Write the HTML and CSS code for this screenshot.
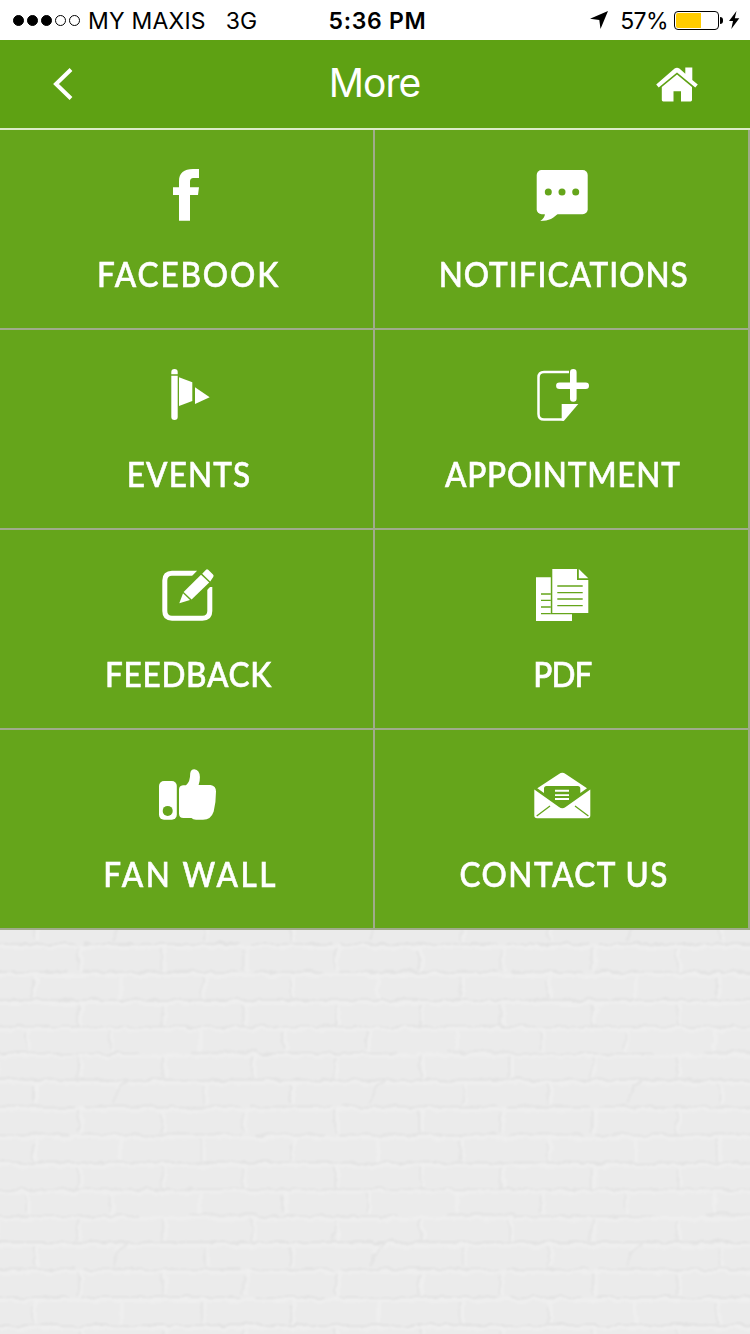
FILE: index.html
```
<!DOCTYPE html>
<html lang="en">
<head>
    <meta charset="UTF-8">
    <meta name="viewport" content="width=device-width, initial-scale=1.0">
    <title>More</title>
    <link rel="stylesheet" href="styles.css">
</head>
<body>
    <div class="status-bar">
        <div class="status-left">
            <div class="signal">
                <span class="dot full"></span>
                <span class="dot full"></span>
                <span class="dot full"></span>
                <span class="dot"></span>
                <span class="dot"></span>
            </div>
            <span class="carrier">MY MAXIS</span>
            <span class="network">3G</span>
        </div>
        <div class="time">5:36 PM</div>
        <div class="status-right">
            <svg class="location" width="20" height="20" viewBox="0 0 20 20"><path d="M19 1 L11.5 19 L10.3 10 L1 8.8 Z"/></svg>
            <span class="percent">57%</span>
            <div class="battery"><div class="battery-level" style="width: 61%"></div></div>
            <div class="battery-cap"></div>
            <svg class="bolt" width="12" height="20" viewBox="0 0 12 20"><path d="M8.5 1 L1 11 H5 L3.3 19 L11.3 8.3 H6.8 Z"/></svg>
        </div>
    </div>

    <header class="header">
        <svg class="back" width="24" height="36" viewBox="0 0 24 36"><path d="M21 3.5 L6 18 L21 32.5"/></svg>
        <h1>More</h1>
        <svg class="home" width="44" height="36" viewBox="0 0 44 36">
            <path d="M1.2 18.6 L19.6 2.6 Q22 .9 24.4 2.6 L30.3 7.8 V1.5 H37.3 V13.9 L42.8 18.6 L40.3 21.5 L22 6.4 L3.7 21.5 Z"/>
            <path d="M22 8.6 L37 21 V34 Q37 35.4 35.6 35.4 H26 V25.3 H18.5 V35.4 H8.2 Q6.8 35.4 6.8 34 V21 Z"/>
        </svg>
    </header>

    <div class="menu">
        <a class="item">
            <svg class="icon" viewBox="0 0 61 60"><path d="M43 4 H37 C28 4 23 8 23 16 V22.3 H17 V30 H23 V55.7 H34 V30 H42 L43 22.3 H34 V17.5 C34 14 35 13 38 13 H43 Z"/></svg>
            <span class="label facebook">FACEBOOK</span>
        </a>
        <a class="item">
            <svg class="icon" viewBox="0 0 61 60">
                <rect x="5.7" y="5" width="51" height="44.3" rx="5"/>
                <path d="M14 48 C14 52 12 54 9.3 56 C18 56 23 53 27.5 48 Z"/>
                <g class="cut"><circle cx="17.3" cy="27" r="3.5"/><circle cx="31" cy="27" r="3.5"/><circle cx="44.7" cy="27" r="3.5"/></g>
            </svg>
            <span class="label notifications">NOTIFICATIONS</span>
        </a>
        <a class="item">
            <svg class="icon" viewBox="0 0 61 60">
                <path d="M15.3 9.3 V7 Q15.3 4 18.5 4 Q21.7 4 21.7 7 V9.3 Z"/>
                <path d="M15.3 10.7 H21.7 V52 Q21.7 55 18.5 55 Q15.3 55 15.3 52 Z"/>
                <path d="M23 12.3 L36.3 17.3 V36 L23 41 Z"/>
                <path d="M39 22.3 L53.7 32.3 L39 39 Z"/>
            </svg>
            <span class="label events">EVENTS</span>
        </a>
        <a class="item">
            <svg class="icon" viewBox="0 0 61 60">
                <path class="line thin" d="M38 7 H13 Q7.5 7 7.5 12.5 V49 Q7.5 54.6 13 54.6 H33"/>
                <path d="M30.7 39 H47.3 L33 55.8 H30.7 Z"/>
                <path class="line plus" d="M42.3 7.3 V33.4 M28.4 20.7 H54.7"/>
            </svg>
            <span class="label appointment">APPOINTMENT</span>
        </a>
        <a class="item">
            <svg class="icon" viewBox="0 0 61 60">
                <path class="line thick" d="M41 8.2 H16 Q8.8 8.2 8.8 15.4 V46 Q8.8 53.2 16 53.2 H46.4 Q53.8 53.2 53.8 46 V22"/>
                <path class="cut" d="M41.8 5 V11 H36 Z M51 25 L57 19 H51 Z"/>
                <path d="M23.3 38.3 L27 28.2 L34 35 Z"/>
                <path d="M27.6 27 L45 9.8 L53.2 17.6 L35.6 34.6 Z"/>
                <path d="M46.2 8.8 L49.8 5 Q50.9 3.6 52.2 4.8 L57 9.5 Q58.2 10.8 57.2 12 L54.2 16.4 Z"/>
            </svg>
            <span class="label feedback">FEEDBACK</span>
        </a>
        <a class="item">
            <svg class="icon" viewBox="0 0 61 60">
                <path d="M5 12.3 H19.8 V49.3 H41 V56 H5 Z"/>
                <path d="M21.3 4 H46 V15 H57.3 V48 H21.3 Z"/>
                <path d="M47.8 4 L57.3 13.3 H47.8 Z"/>
                <path class="cut-line" d="M26.3 21 H51.7 M26.3 27.7 H51.7 M26.3 34 H51.7 M26.3 40.7 H51.7 M10 29 H19.8 M10 35.3 H19.8 M10 42 H19.8 M10 48.6 H19.8"/>
            </svg>
            <span class="label pdf">PDF</span>
        </a>
        <a class="item">
            <svg class="icon" viewBox="0 0 61 60">
                <rect x="3" y="16" width="17.8" height="38.8" rx="5"/>
                <circle class="cut" cx="11.7" cy="45.9" r="5"/>
                <path d="M27 20.2 H30 Q34.2 17 34.2 8.5 Q34.8 4.3 38.3 4.3 Q43.7 5 43.9 12 Q44 16 42.6 20 H54.5 Q60 20.6 60 26.5 Q60 37 57.7 46.5 Q55 54.8 47 54.8 H40 Q37 54.8 35.5 53 H27.5 Q23 53 23 48.5 V24.5 Q23 20.5 27 20.2 Z"/>
            </svg>
            <span class="label fan-wall">FAN WALL</span>
        </a>
        <a class="item">
            <svg class="icon" viewBox="0 0 61 60">
                <path d="M6.3 23.3 L28 9 Q31.3 6.6 34.6 9 L56 23.3 L49.3 28 V23.5 Q49.3 21 46.8 21 H15.6 Q13 21 13 23.5 V28 Z"/>
                <path d="M3.3 24.6 L28 42 Q31.3 44.4 34.6 42 L59.3 24.6 V50.5 Q59.3 53.3 56.5 53.3 H6.1 Q3.3 53.3 3.3 50.5 Z"/>
                <path d="M24 24.8 H38 V26.7 H24 Z M24 29.2 H38 V31 H24 Z M24 33.1 H38 V34.9 H24 Z"/>
                <path class="cut-line" d="M5.7 51 L19 41 M57.4 51 L44 41"/>
            </svg>
            <span class="label contact">CONTACT US</span>
        </a>
    </div>

    <svg class="wall" width="750" height="404">
        <defs>
            <pattern id="bricks" y="13" width="257.3" height="162.6" patternUnits="userSpaceOnUse">
                <rect class="brick" width="258" height="163"/>
                <path class="wall-light" d="M0 4 H258 M0 32 H258 M0 60 H258 M0 86 H258 M0 113 H258 M0 140 H258 M81 2 V28 M165 2 V28 M247 2 V28 M36 30 V56 M121 30 V56 M205 30 V56 M81 58 V83 M165 58 V83 M247 58 V83 M29 85 V109 M112 85 V109 M200 85 V109 M80 112 V136 M166 112 V136 M255 112 V136 M36 138 V161 M116 146 Q120 138 132 138 M207 138 V161"/>
                <path class="wall-dark" d="M0 1 H75 M84 1 H240 M250 1 H258 M0 29 H68 M82 29 H240 M254 29 H258 M0 57 H258 M0 83.5 H258 M0 110.5 H140 M190 109 H258 M0 136.5 H258"/>
                <path class="wall-side" d="M78 4 V27 M162 6 V27 M243 8 V27 M33 38 V55 M202 34 V55 M78 62 V83 M163 62 V83 M243 62 V83 M26 90 V106 M110 88 V106 M79 114 L75 135 M163 114 V135 M252 114 V135 M33 142 V160 M113 160 Q115 144 128 138 M205 142 V160"/>
            </pattern>
            <filter id="rough" x="0" y="0" width="100%" height="100%">
                <feTurbulence type="fractalNoise" baseFrequency="0.07" numOctaves="3" seed="4" result="noise"/>
                <feDisplacementMap in="SourceGraphic" in2="noise" scale="7" xChannelSelector="R" yChannelSelector="G"/>
                <feGaussianBlur stdDeviation="0.9"/>
            </filter>
        </defs>
        <rect x="-10" y="-10" width="770" height="424" fill="url(#bricks)" filter="url(#rough)"/>
    </svg>
</body>
</html>
```
FILE: styles.css
```
* { box-sizing: border-box; }
body { margin: 0; width: 750px; height: 1334px; overflow: hidden; background: #ececec; font-family: Inter, "Liberation Sans", sans-serif; }

.status-bar { display: grid; grid-template-columns: 1fr auto 1fr; align-items: center; height: 40px; padding: 0 10px 0 13px; background: #fff; color: #000; font-size: 23px; }
.status-left, .status-right, .signal { display: flex; align-items: center; }
.status-left, .time, .percent { padding-top: 1px; }
.status-right { justify-content: flex-end; }
.signal { gap: 3px; }
.dot { width: 11px; height: 11px; border: 1px solid #000; border-radius: 50%; }
.dot.full { background: #000; }
.carrier { margin-left: 8px; letter-spacing: 0.2px; }
.network { margin-left: 20px; }
.time { padding-left: 2px; font-weight: 600; letter-spacing: 0.7px; }
.location { margin-right: 11px; }
.percent { margin-right: 6px; letter-spacing: -0.6px; }
.battery { width: 45px; height: 19px; padding: 1px; border: 1px solid #000; border-radius: 4px; }
.battery-level { height: 100%; background: #fc0; border-radius: 2px 0 0 2px; }
.battery-cap { width: 3px; height: 7px; margin: 0 5px 0 1px; background: #000; border-radius: 0 3px 3px 0; }

.header { display: grid; grid-template-columns: 1fr auto 1fr; align-items: center; height: 90px; padding: 0 51px 0 50px; background: #5ea113; border-bottom: 2px solid #dcebc8; color: #fff; }
.header h1 { margin: 0 0 4px; font-size: 39px; font-weight: 400; letter-spacing: -1px; }
.back { fill: none; stroke: #fff; stroke-width: 4; }
.home { justify-self: end; fill: #fff; }

.menu { display: grid; grid-template-columns: 375px 375px; }
.item { display: flex; flex-direction: column; align-items: center; height: 200px; padding-top: 35px; background: #65a51b; border-right: 2px solid #a0ab8c; border-bottom: 2px solid #a0ab8c; color: #fff; }
.icon { width: 61px; height: 60px; fill: #fff; }
.cut { fill: #65a51b; }
.cut-line { fill: none; stroke: #65a51b; stroke-width: 1.3; }
.line { fill: none; stroke: #fff; }
.thin { stroke-width: 2.5; }
.thick { stroke-width: 5; }
.plus { stroke-width: 6.6; stroke-linecap: round; }
/* condensed a little so the caps stay narrow and airy */
.label { margin-top: 27px; padding-left: 4px; font-family: Lato, sans-serif; font-size: 35px; font-weight: 500; line-height: 42px; white-space: nowrap; transform: scaleX(0.9); -webkit-text-stroke: 0.6px #fff; }
.facebook { letter-spacing: 2.1px; padding-left: 5px; }
.notifications { letter-spacing: 1.1px; padding-left: 5px; }
.events { letter-spacing: 1.3px; padding-left: 5px; }
.appointment { letter-spacing: 0.9px; }
.feedback { letter-spacing: 0.8px; }
.pdf { letter-spacing: -0.9px; padding-left: 1px; }
.fan-wall { letter-spacing: 2.8px; padding-left: 8px; }
.contact { letter-spacing: 1.7px; padding-left: 5px; }

.wall { display: block; }
.brick { fill: #ebebeb; }
.wall-light { fill: none; stroke: #f0f0f0; stroke-width: 2.6; }
.wall-dark { fill: none; stroke: #e0e0e0; stroke-width: 1.6; }
.wall-side { fill: none; stroke: #e3e3e3; stroke-width: 1.8; }
```
